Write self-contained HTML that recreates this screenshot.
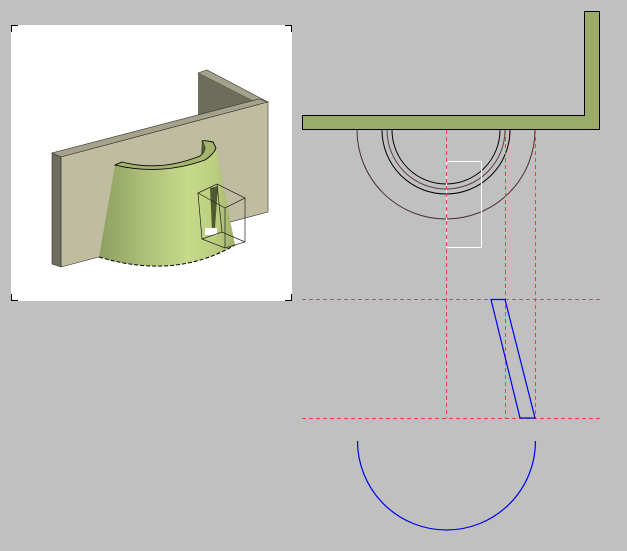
<!DOCTYPE html>
<html><head><style>
html,body{margin:0;padding:0;background:#c0c0c0;width:627px;height:551px;overflow:hidden}
svg{display:block}
</style></head><body>
<svg width="627" height="551" viewBox="0 0 627 551" xmlns="http://www.w3.org/2000/svg">
<defs>
<linearGradient id="cone" x1="0" x2="1" y1="0" y2="0">
<stop offset="0" stop-color="#8e9e60"/>
<stop offset="0.35" stop-color="#afc07a"/>
<stop offset="0.65" stop-color="#c6da8a"/>
<stop offset="0.85" stop-color="#bccf80"/>
<stop offset="1" stop-color="#9fb068"/>
</linearGradient>
</defs>
<rect x="11" y="25" width="281" height="276" fill="#fff"/>
<g stroke="#000" stroke-width="1" fill="none">
<path d="M11.5 32V25.5H18"/><path d="M285 25.5H291.5V32"/>
<path d="M11.5 294V300.5H18"/><path d="M285 300.5H291.5V294"/>
</g>
<polygon points="198,73 207,70 268,102 259,104" fill="#a4a28a" stroke="#333" stroke-width="0.6"/>
<polygon points="198,73 259,104 198,121" fill="#6e6c5a"/>
<polygon points="52,153 61,157 268,102 259,99" fill="#a4a28a" stroke="#333" stroke-width="0.6"/>
<polygon points="61,157 268,102 268,212 61,267" fill="#c0bca0" stroke="#333" stroke-width="0.6"/>
<polygon points="52,153 61,157 61,267 52,264" fill="#6e6c5a" stroke="#333" stroke-width="0.6"/>
<path d="M115,165 Q160,178 205,160 Q214,154 216,148 L235,245 Q175,280 99,257 Z" fill="url(#cone)"/>
<path d="M115,165 Q160,176 205,160 Q214,154 216,148 L213,142 Q204,140 202,141 Q208,150 200,156 Q160,172 122,162 Z" fill="#a3b46c" stroke="#000" stroke-width="0.9"/>
<path d="M202,141 L206,148 L201,156 Z" fill="#4f5a30"/>
<path d="M99,257 Q175,280 235,245" fill="none" stroke="#000" stroke-width="1" stroke-dasharray="4 2"/>
<polygon points="210,188 218,186 215,228 212,230" fill="#4f5a30"/>
<rect x="205" y="228" width="12" height="7" fill="#fff"/>
<g fill="none" stroke="#222" stroke-width="0.7">
<polygon points="198,193 217,184 245,198 225,208"/>
<polygon points="202,239 222,232 245,242 225,248"/>
<line x1="198" y1="193" x2="202" y2="239"/><line x1="217" y1="184" x2="222" y2="232"/>
<line x1="245" y1="198" x2="245" y2="242"/><line x1="225" y1="208" x2="225" y2="248"/>
</g>
<path d="M302.5,115.5H584.5V11.5H599.5V129.5H302.5Z" fill="#9bac6a" stroke="#000" stroke-width="1"/>
<g fill="none" stroke-width="1">
<path d="M392,130 A54,54 0 0 0 500,130" stroke="#000"/>
<path d="M387,130 A59,59 0 0 0 505,130" stroke="#5a4040"/>
<path d="M382,130 A64,64 0 0 0 510,130" stroke="#000"/>
<path d="M357,130 A89,89 0 0 0 535,130" stroke="#4a3030"/>
</g>
<rect x="446.5" y="161.5" width="35" height="86" fill="none" stroke="#fff" stroke-width="1"/>
<g stroke="#f04040" stroke-width="1" stroke-dasharray="4 3" fill="none">
<line x1="446.5" y1="130" x2="446.5" y2="418"/>
<line x1="505.5" y1="130" x2="505.5" y2="418"/>
<line x1="535.5" y1="130" x2="535.5" y2="418"/>
<line x1="302" y1="418.5" x2="600" y2="418.5"/>
</g>
<line x1="302" y1="299.5" x2="600" y2="299.5" stroke="#8a6a6a" stroke-width="1" stroke-dasharray="4 3"/>
<g stroke="#0000ee" stroke-width="1.2" fill="none">
<polygon points="491,299.5 505,299.5 535,418 520,418"/>
<path d="M357.5,441 A88.5,88.5 0 0 0 535.5,441"/>
</g>
</svg>
</body></html>
